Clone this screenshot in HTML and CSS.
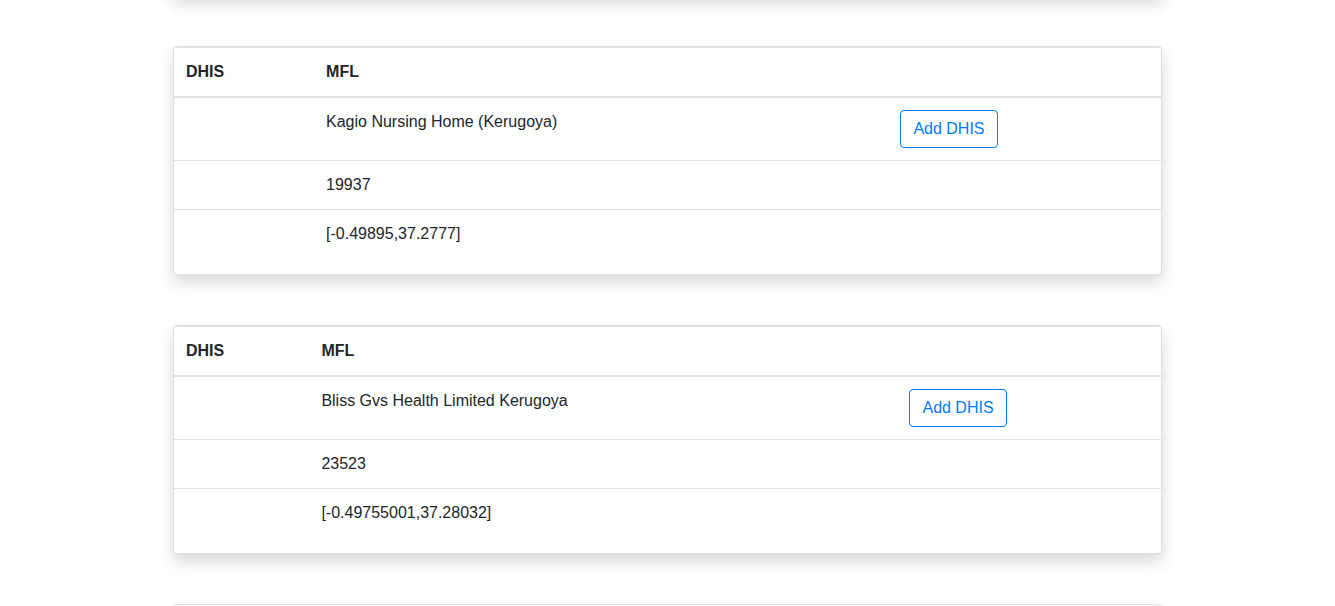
FILE: index.html
```html
<!DOCTYPE html>
<html lang="en">
<head>
<meta charset="utf-8">
<title>Facilities</title>
<link rel="stylesheet" href="styles.css">
</head>
<body>
<main class="page">
  <div class="card card-prev"></div>

  <div class="card">
    <table class="table">
      <thead>
        <tr><th>DHIS</th><th>MFL</th><th></th></tr>
      </thead>
      <tbody>
        <tr><td></td><td>Kagio Nursing Home (Kerugoya)</td><td><button class="btn">Add DHIS</button></td></tr>
        <tr><td></td><td>19937</td><td></td></tr>
        <tr><td></td><td>[-0.49895,37.2777]</td><td></td></tr>
      </tbody>
    </table>
  </div>

  <div class="card">
    <table class="table">
      <thead>
        <tr><th>DHIS</th><th>MFL</th><th></th></tr>
      </thead>
      <tbody>
        <tr><td></td><td>Bliss Gvs Health Limited Kerugoya</td><td><button class="btn">Add DHIS</button></td></tr>
        <tr><td></td><td>23523</td><td></td></tr>
        <tr><td></td><td>[-0.49755001,37.28032]</td><td></td></tr>
      </tbody>
    </table>
  </div>

  <div class="card card-next"></div>
</main>
</body>
</html>
```

FILE: styles.css
```css
* { box-sizing: border-box; }

html, body {
  margin: 0;
  padding: 0;
  background: #fff;
  overflow: hidden;
}

body {
  font-family: "Liberation Sans", Arial, sans-serif;
  font-size: 16px;
  line-height: 1.5;
  color: #212529;
}

.page {
  width: 989px;
  margin: 0 auto;
}

.card {
  background: #fff;
  border: 1px solid rgba(0, 0, 0, 0.125);
  border-radius: 4px;
  box-shadow: 0 8px 16px rgba(0, 0, 0, 0.15);
  margin-bottom: 50px;
  overflow: hidden;
}

.card-prev {
  height: 200px;
  margin-top: -200px;
  position: relative;
  top: -4px;
  margin-bottom: 46px;
}

.card-next {
  height: 200px;
}

.table {
  width: 100%;
  border-collapse: collapse;
  margin-bottom: 16px;
}

.table th,
.table td {
  padding: 12px;
  vertical-align: top;
  text-align: left;
  border-top: 1px solid #dee2e6;
}

.table thead th {
  font-weight: 700;
  vertical-align: bottom;
  border-bottom: 2px solid #dee2e6;
}

.btn {
  display: inline-block;
  font-family: inherit;
  font-size: 16px;
  line-height: 1.5;
  padding: 6px 12px;
  color: #007bff;
  background: transparent;
  border: 1px solid #007bff;
  border-radius: 4px;
  cursor: pointer;
}
```
